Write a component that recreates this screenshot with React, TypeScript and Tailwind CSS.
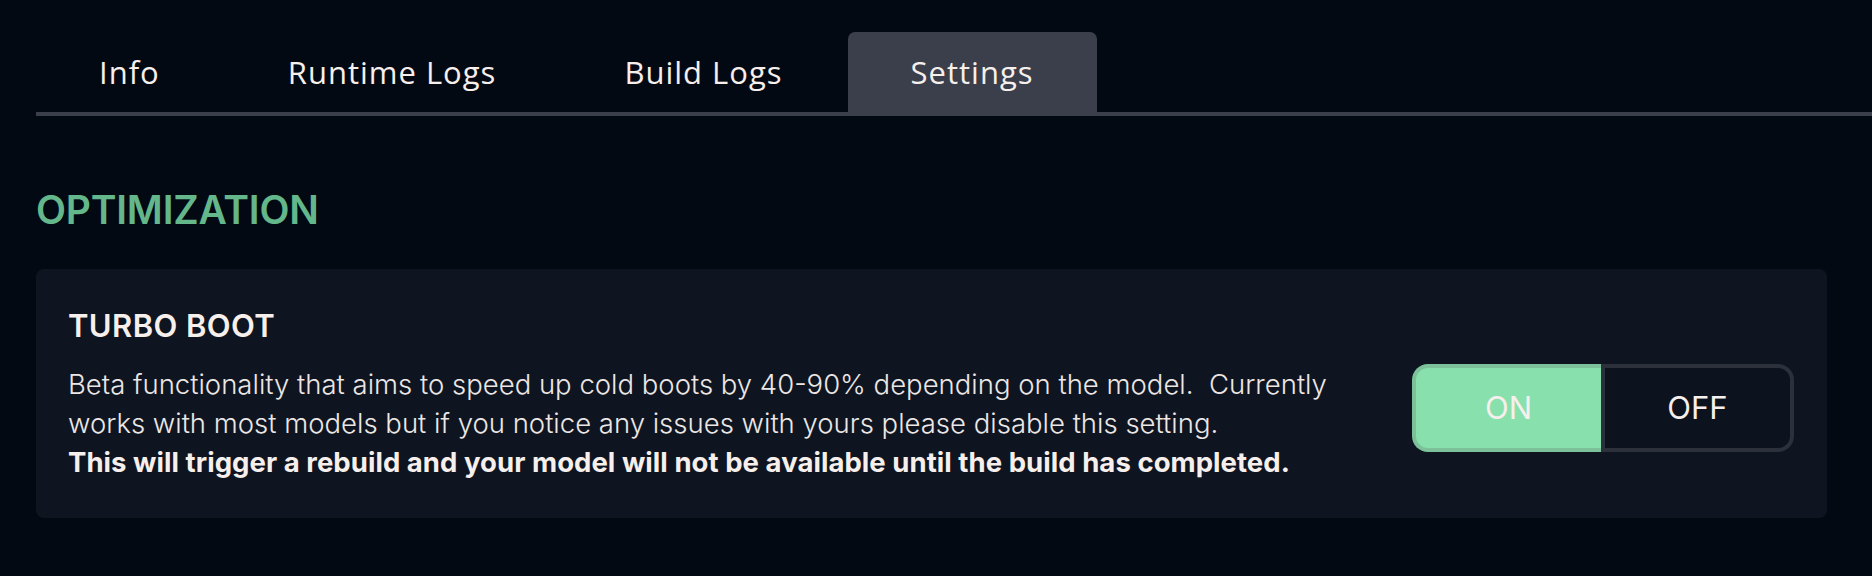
import React from "react";

const tabs = ["Info", "Runtime Logs", "Build Logs", "Settings"];

export default function App() {
  return (
    <div
      className="w-[1872px] h-[576px] overflow-hidden bg-[#030913] text-[#f6efec]"
      style={{ fontFamily: "Inter, 'Noto Sans', sans-serif" }}
    >
      <div className="pt-[32px] pl-[36px]">
        <div className="flex gap-[2px] border-b-4 border-[#3a3f4b]">
          {tabs.map((t) => (
            <div
              key={t}
              className={`h-[80px] px-[63px] flex items-center rounded-t-[7px] text-[31px] font-medium tracking-[1px] ${
                t === "Settings" ? "bg-[#3a3f4b]" : ""
              }`}
              style={{ fontFamily: "'Open Sans', sans-serif" }}
            >
              {t}
            </div>
          ))}
        </div>
      </div>

      <div className="pl-[36px] pr-[45px]">
        <h2 className="mt-[70px] text-[39px] leading-[48px] font-semibold text-[#63b78b] tracking-[-0.2px]">
          OPTIMIZATION
        </h2>

        <div className="mt-[35px] rounded-[8px] bg-[#0e1521] pl-[32px] pr-[33px] pt-[38px] pb-[36px] flex items-start justify-between">
          <div>
            <div className="text-[31px] leading-[38px] font-semibold tracking-[0.4px]">TURBO BOOT</div>
            <p className="mt-[20px] text-[27.5px] leading-[39px] font-light text-[#ece7e5]">
              Beta functionality that aims to speed up cold boots by 40-90% depending on the model.&nbsp; Currently
              <br />
              works with most models but if you notice any issues with yours please disable this setting.
              <br />
              <span className="font-bold text-[#f6efec] tracking-[0.05px]">
                This will trigger a rebuild and your model will not be available until the build has completed.
              </span>
            </p>
          </div>

          <div className="mt-[57px] flex h-[88px] w-[382px] shrink-0">
            <div className="flex-1 flex items-center justify-center rounded-l-[16px] border-4 border-r-0 border-[#7cc19a] bg-[#88e0ad] text-[31px] text-[#f6efec]">
              ON
            </div>
            <div className="flex-1 flex items-center justify-center rounded-r-[16px] border-4 border-[#2b303b] bg-[#0c121e] text-[31px] text-[#f6efec]">
              OFF
            </div>
          </div>
        </div>
      </div>
    </div>
  );
}
